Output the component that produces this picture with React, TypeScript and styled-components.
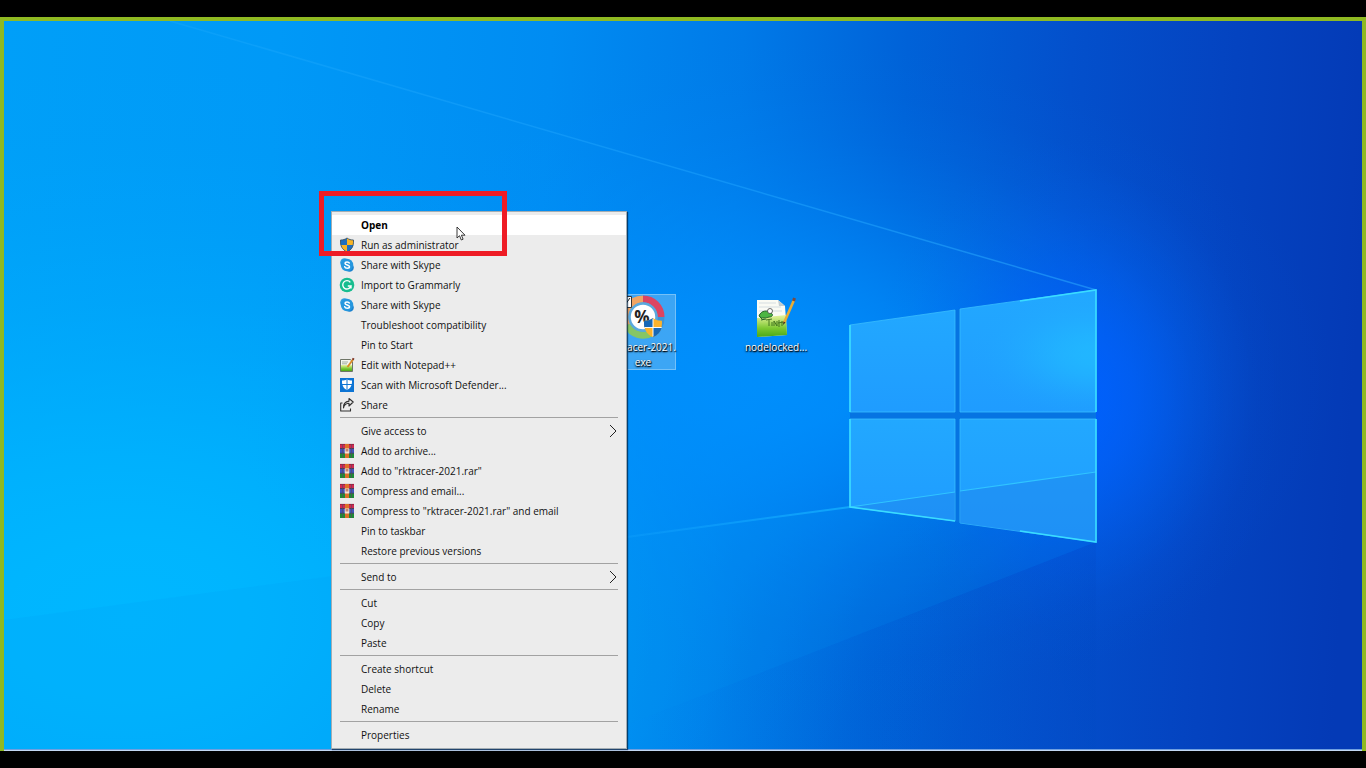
import React from "react";
import styled, { createGlobalStyle } from "styled-components";

const Global = createGlobalStyle`
  * { box-sizing: border-box; }
  body { margin: 0; background: #000; font-family: "Open Sans", "Noto Sans", sans-serif; }
  button { font: inherit; color: inherit; border: 0; margin: 0; padding: 0; background: none; }
`;

const Page = styled.main`
  display: flex;
  flex-direction: column;
  min-height: 100vh;
  padding: 17px 0;
  background: #000;
`;

const Desktop = styled.section`
  position: relative;
  flex: 1;
  min-height: 734px;
  overflow: hidden;
  border: solid #8fb922;
  border-width: 4px 4px 0;
`;

const Wallpaper = styled.svg`
  position: absolute;
  inset: 0;
  width: 100%;
  height: 100%;
`;

const TaskbarEdge = styled.div`
  position: absolute;
  left: 0;
  right: 0;
  bottom: 0;
  height: 2px;
  background: #c4d8f4;
  border-top: 1px solid #6f9fe0;
`;

const Shortcut = styled.button<{ $x: number; $y: number; $selected?: boolean }>`
  position: absolute;
  left: ${(p) => p.$x}px;
  top: ${(p) => p.$y}px;
  display: flex;
  flex-direction: column;
  align-items: center;
  width: 66px;
  height: 76px;
  color: #fff;
  font-size: 10px;
  line-height: 15px;
  white-space: nowrap;
  text-shadow: 0 1px 2px #000, 1px 1px 1px #000;
  background: ${(p) => (p.$selected ? "rgba(120, 190, 240, 0.5)" : "none")};
  border: 1px solid ${(p) => (p.$selected ? "rgba(140, 205, 250, 0.7)" : "transparent")};
`;

const ShortcutIcon = styled.svg`
  flex: none;
  width: 44px;
  height: 44px;
  margin-bottom: 1px;
`;

const IconText = styled.text`
  text-shadow: none;
`;

const Menu = styled.ul`
  position: absolute;
  left: 327px;
  top: 190px;
  width: 296px;
  margin: 0;
  padding: 3px 0;
  list-style: none;
  color: #111;
  background: #ececec;
  border: 1px solid #a3adb3;
  box-shadow: 1px 1px 1px rgba(0, 30, 60, 0.7);
`;

const Item = styled.button<{ $active?: boolean }>`
  display: grid;
  grid-template-columns: 16px 1fr 10px;
  grid-template-rows: 20px;
  column-gap: 6px;
  align-items: center;
  width: 100%;
  height: 20px;
  padding: 0 8px 0 7px;
  text-align: left;
  font-size: 10px;
  white-space: nowrap;
  color: ${(p) => (p.$active ? "#000" : "inherit")};
  font-weight: ${(p) => (p.$active ? 700 : 400)};
  background: ${(p) => (p.$active ? "#fff" : "none")};
`;

const Label = styled.span`
  padding-top: 1px;
  line-height: 19px;
`;

const Separator = styled.li`
  height: 6px;
  padding: 2px 8px 0;
  &::before {
    content: "";
    display: block;
    height: 1px;
    background: #a2a2a2;
  }
`;

const Highlight = styled.div`
  position: absolute;
  left: 315px;
  top: 170px;
  width: 188px;
  height: 65px;
  border: 5px solid #ee1c25;
  pointer-events: none;
`;

const Cursor = styled.svg`
  position: absolute;
  left: 452px;
  top: 205px;
`;

const ShieldArt = () => (
  <>
    <path d="M8 1c2 1.500 4 2 6.500 2 .3 6-1.500 9.500-6.500 12-5-2.500-6.800-6-6.500-12C4 3 6 2.500 8 1z" fill="#f9b424" />
    <path d="M8 1v7H1.700C1.500 6.500 1.400 5 1.500 3 4 3 6 2.500 8 1z" fill="#1c6fc0" />
    <path d="M8 8h6.300c-.8 3.300-2.800 5.500-6.300 7z" fill="#1c6fc0" />
    <path d="M8 1c2 1.500 4 2 6.500 2 .3 6-1.500 9.500-6.500 12-5-2.500-6.800-6-6.500-12C4 3 6 2.500 8 1z" fill="none" stroke="#39536b" strokeWidth=".9" />
  </>
);

const BadgeShieldArt = () => (
  <>
    <path d="M8 1c2 1.500 4 2 6.500 2 .3 6-1.500 9.500-6.500 12-5-2.500-6.800-6-6.500-12C4 3 6 2.500 8 1z" fill="#fbb32c" />
    <path d="M8 1v7H1.700C1.500 6.500 1.400 5 1.500 3 4 3 6 2.500 8 1z" fill="#1769b8" />
    <path d="M8 8h6.300c-.8 3.300-2.800 5.500-6.300 7z" fill="#1769b8" />
    <path d="M8 1.500v13M1.700 8h12.600" stroke="#fff" strokeWidth=".7" />
  </>
);

const NotepadArt = () => (
  <>
    <path d="M1.500 2.500h10l2 2.500v9.500h-12z" fill="#f4f6ee" stroke="#5f6658" strokeWidth=".9" />
    <path d="M2 8h11v6H2z" fill="url(#padGreen)" />
    <path d="M3 5h6M3 6.800h5" stroke="#8fa08f" strokeWidth=".8" />
    <path d="M8.500 10L14 2.500" stroke="#d98a25" strokeWidth="1.900" />
    <path d="M13.700 2.800l1-1.600" stroke="#7a2f20" strokeWidth="2" />
  </>
);

const icons: Record<string, React.ReactNode> = {
  shield: <ShieldArt />,
  skype: (
    <>
      <circle cx="5.500" cy="5.500" r="4.300" fill="#2f9fe2" />
      <circle cx="10.500" cy="10.500" r="4.300" fill="#1b82cf" />
      <circle cx="8" cy="8" r="6.200" fill="#2597df" />
      <path d="M10.300 6C9.800 4.600 6 4.400 6 6.300c0 2.200 4.500 1.200 4.500 3.400 0 2-4.200 1.900-4.800.1" fill="none" stroke="#fff" strokeWidth="1.500" strokeLinecap="round" />
    </>
  ),
  grammarly: (
    <>
      <circle cx="8" cy="8" r="7.300" fill="#18bd8f" />
      <path d="M11.300 5.300A4.200 4.200 0 1 0 12 9H8.800M12 9v2.600" fill="none" stroke="#fff" strokeWidth="1.400" />
    </>
  ),
  notepad: <NotepadArt />,
  defender: (
    <>
      <path d="M1 1h14v14H1z" fill="#0c74d4" />
      <path d="M8 2.300c1.700 1 3.300 1.300 5 1.300.2 4.600-1.200 7.600-5 9.700-3.800-2.100-5.200-5.100-5-9.700 1.700 0 3.300-.3 5-1.300z" fill="#fff" />
      <path d="M8 2v12M2.500 7.500h11" stroke="#0c74d4" strokeWidth="1" />
    </>
  ),
  share: (
    <path d="M3.500 6H1.700v8h9.800v-2.500M4.500 11c.5-3 2.500-4.500 5.500-4.700V9l4.200-4L10 1.500v2.600C6 4.500 4 7.500 4.500 11z" fill="none" stroke="#303030" strokeWidth="1.100" strokeLinejoin="round" />
  ),
  rar: (
    <>
      <path d="M1 1h14v4.700H1z" fill="#cf2a50" />
      <path d="M1 5.700h14v4.600H1z" fill="#4256b8" />
      <path d="M1 10.300h14V15H1z" fill="#1f8a35" />
      <path d="M1 5.500h14M1 10.300h14" stroke="#2b2a45" strokeWidth=".7" />
      <path d="M1 1.400h14" stroke="#8f2038" strokeWidth=".8" />
      <path d="M6 1h4v14H6z" fill="#de7128" />
      <path d="M3.500 1v14M12.500 1v14" stroke="#5b4a62" strokeWidth=".6" />
      <path d="M5.700 5.500h4.600v5H5.700z" fill="#efe6d8" />
      <path d="M7.200 6v2.500M8.800 6v2.500" stroke="#b04a34" strokeWidth=".9" />
    </>
  ),
};

type Entry = { label: string; icon?: string; active?: boolean; submenu?: boolean };

const groups: Entry[][] = [
  [
    { label: "Open", active: true },
    { label: "Run as administrator", icon: "shield" },
    { label: "Share with Skype", icon: "skype" },
    { label: "Import to Grammarly", icon: "grammarly" },
    { label: "Share with Skype", icon: "skype" },
    { label: "Troubleshoot compatibility" },
    { label: "Pin to Start" },
    { label: "Edit with Notepad++", icon: "notepad" },
    { label: "Scan with Microsoft Defender...", icon: "defender" },
    { label: "Share", icon: "share" },
  ],
  [
    { label: "Give access to", submenu: true },
    { label: "Add to archive...", icon: "rar" },
    { label: 'Add to "rktracer-2021.rar"', icon: "rar" },
    { label: "Compress and email...", icon: "rar" },
    { label: 'Compress to "rktracer-2021.rar" and email', icon: "rar" },
    { label: "Pin to taskbar" },
    { label: "Restore previous versions" },
  ],
  [{ label: "Send to", submenu: true }],
  [{ label: "Cut" }, { label: "Copy" }, { label: "Paste" }],
  [{ label: "Create shortcut" }, { label: "Delete" }, { label: "Rename" }],
  [{ label: "Properties" }],
];

/* Radial light that fades out along an eased curve, so its rim stays invisible. */
const Light = ({ id, color, peak = 1 }: { id: string; color: string; peak?: number }) => (
  <radialGradient id={id}>
    {[1, 0.93, 0.76, 0.53, 0.3, 0.13, 0.03, 0].map((alpha, i) => (
      <stop key={i} offset={i / 7} stopColor={color} stopOpacity={alpha * peak} />
    ))}
  </radialGradient>
);

const Background = () => (
  <Wallpaper viewBox="4 21 1358 730" preserveAspectRatio="xMidYMid slice" aria-hidden="true">
    <defs>
      <linearGradient id="base" gradientUnits="userSpaceOnUse" x1="0" y1="100" x2="1366" y2="180">
        <stop offset="0" stopColor="#009ff8" />
        <stop offset=".2" stopColor="#0099f7" />
        <stop offset=".4" stopColor="#008cf2" />
        <stop offset=".54" stopColor="#007ae8" />
        <stop offset=".66" stopColor="#0062d8" />
        <stop offset=".78" stopColor="#0350cc" />
        <stop offset=".9" stopColor="#0443c0" />
        <stop offset="1" stopColor="#043ab6" />
      </linearGradient>
      <Light id="cyan" color="#00b7ff" />
      <Light id="mid" color="#0091ff" peak={0.9} />
      <Light id="glow" color="#0060ff" peak={0.9} />
      <Light id="paneLight" color="#22c4ff" peak={0.6} />
      <linearGradient id="ray" gradientUnits="userSpaceOnUse" x1="170" y1="21" x2="1096" y2="290">
        <stop offset="0" stopColor="#30b4ff" stopOpacity=".2" />
        <stop offset=".6" stopColor="#1ea4ff" stopOpacity=".5" />
        <stop offset="1" stopColor="#30b0ff" stopOpacity=".5" />
      </linearGradient>
      <linearGradient id="floor" gradientUnits="userSpaceOnUse" x1="627" y1="537" x2="850" y2="507">
        <stop offset="0" stopColor="#14a4ff" stopOpacity=".3" />
        <stop offset="1" stopColor="#14b0ff" stopOpacity=".8" />
      </linearGradient>
      <linearGradient id="shade" gradientUnits="userSpaceOnUse" x1="1096" y1="542" x2="640" y2="715">
        <stop offset="0" stopColor="#0046c0" stopOpacity=".2" />
        <stop offset="1" stopColor="#0060d0" stopOpacity="0" />
      </linearGradient>
      <linearGradient id="pane" x1="0" x2="0" y1="0" y2="1">
        <stop offset="0" stopColor="#22a8ff" />
        <stop offset="1" stopColor="#1f9cff" />
      </linearGradient>
      <linearGradient id="padGreen" x1="0" x2="0" y1="0" y2="1">
        <stop offset="0" stopColor="#e9f4a0" />
        <stop offset=".6" stopColor="#7cc832" />
        <stop offset="1" stopColor="#4aa818" />
      </linearGradient>
      <clipPath id="topRightPane">
        <path d="M960 309L1096 290V412H960z" />
      </clipPath>
    </defs>
    <path d="M0 0h1370v770H0z" fill="url(#base)" />
    <ellipse cx="130" cy="620" rx="860" ry="560" fill="url(#cyan)" />
    <ellipse cx="780" cy="380" rx="560" ry="340" fill="url(#mid)" />
    <ellipse cx="1075" cy="400" rx="210" ry="270" fill="url(#glow)" />
    <path d="M850 507L4 620V751H560L1096 542z" fill="#0090ee" opacity=".12" />
    <path d="M1096 542L560 751H1096z" fill="url(#shade)" />
    <path d="M170 21L1096 290" stroke="url(#ray)" strokeWidth="1.500" />
    <path d="M627 537L850 507" stroke="url(#floor)" strokeWidth="2" />
    <path d="M850 325L1096 290V542L850 507z" fill="#0674e2" />
    <g fill="url(#pane)" stroke="#38beff" strokeOpacity=".8" strokeWidth="1">
      <path d="M850 325L955 310V412H850z" />
      <path d="M960 309L1096 290V412H960z" />
      <path d="M850 419H955V521L850 507z" />
      <path d="M960 419H1096V542L960 523z" />
    </g>
    <ellipse cx="1096" cy="355" rx="130" ry="70" fill="url(#paneLight)" clipPath="url(#topRightPane)" />
    <path d="M850 507L955 492V521zM960 491L1096 472V542L960 523z" fill="#1e86ee" opacity=".5" />
    <path d="M850 507L955 492M960 491L1096 472" stroke="#30c4ff" strokeWidth="1.200" />
    <path d="M850 412V325M850 419V507L955 521M1020 301L1096 290V412M1096 419V542L1020 531" fill="none" stroke="#3adcff" strokeWidth="1.600" />
  </Wallpaper>
);

export default function App() {
  return (
    <Page>
      <Global />
      <Desktop>
        <Background />
        <TaskbarEdge />
        <Shortcut $x={606} $y={273} $selected>
          <ShortcutIcon viewBox="0 0 44 44" aria-hidden="true">
            <g fill="none" strokeWidth="7">
              <path d="M22 4A18 18 0 0 1 40 22" stroke="#dc4462" />
              <path d="M40 22A18 18 0 0 1 31 38" stroke="#3c94d8" />
              <path d="M31 38A18 18 0 0 1 6 30" stroke="#86c665" />
              <path d="M6 30A18 18 0 0 1 22 4" stroke="#f0a463" />
            </g>
            <circle cx="22" cy="22" r="13.500" fill="#fff" stroke="#5aa9de" strokeWidth="2.500" />
            <IconText x="21" y="28" textAnchor="middle" fontSize="17" fontWeight="700" fill="#222">%</IconText>
            <svg x="21" y="21" width="22" height="23" viewBox="0 0 16 16"><BadgeShieldArt /></svg>
            <path d="M-.5 1.500h11v11h-11z" fill="#fff" stroke="#333" />
            <path d="M2 7l2 3 5-7" fill="none" stroke="#222" />
          </ShortcutIcon>
          <span>rktracer-2021.<br />exe</span>
        </Shortcut>
        <Shortcut $x={739} $y={273}>
          <ShortcutIcon viewBox="0 0 44 44" aria-hidden="true">
            <path d="M3 5h21l7 6 2 29-30 2z" fill="#fafbf4" />
            <path d="M3 23l29-3 1 20-30 2z" fill="url(#padGreen)" />
            <path d="M24 5l7 6h-6z" fill="#c2ccd0" />
            <path d="M5 8h17M5 12h22M5 16h23" stroke="#d5dde0" />
            <path d="M5 21c2-6 9-6 12-3 3 2 1 4-2 4-3 1-7 2-10-1z" fill="#4cb643" stroke="#27662a" />
            <circle cx="16" cy="16" r="2.500" fill="#fff" stroke="#333" strokeWidth=".7" />
            <path d="M7 25l5-1M6 22l3 3" stroke="#27662a" />
            <path d="M12 25l6-1M15 25v6M18 27v4M20 31v-5l3 5v-5M25 32v-7M28 31v-5M24 28l6-1" stroke="#437421" strokeWidth="1" fill="none" />
            <path d="M30 28L40 5" stroke="#e9ac35" strokeWidth="2.600" />
            <path d="M39.500 6l1-3" stroke="#794b43" strokeWidth="3" />
            <path d="M29 30l.5-3.500 2 1z" fill="#3b3323" />
          </ShortcutIcon>
          <span>nodelocked...</span>
        </Shortcut>
        <Menu>
          {groups.map((group, g) => (
            <React.Fragment key={g}>
              {g > 0 && <Separator role="separator" />}
              {group.map((entry, i) => (
                <li key={i}>
                  <Item $active={entry.active}>
                    <svg width="16" height="16" viewBox="0 0 16 16" aria-hidden="true">{entry.icon && icons[entry.icon]}</svg>
                    <Label>{entry.label}</Label>
                    {entry.submenu && (
                      <svg width="10" height="14" viewBox="0 0 10 14" aria-hidden="true">
                        <path d="M2 1l6 6-6 6" fill="none" stroke="#222" />
                      </svg>
                    )}
                  </Item>
                </li>
              ))}
            </React.Fragment>
          ))}
        </Menu>
        <Highlight />
        <Cursor width="10" height="16" viewBox="0 0 10 16" aria-hidden="true">
          <path d="M1 1v11l2.500-2.300L5.300 14l1.800-.8-1.700-4H9z" fill="#fff" stroke="#222" strokeWidth=".9" />
        </Cursor>
      </Desktop>
    </Page>
  );
}
